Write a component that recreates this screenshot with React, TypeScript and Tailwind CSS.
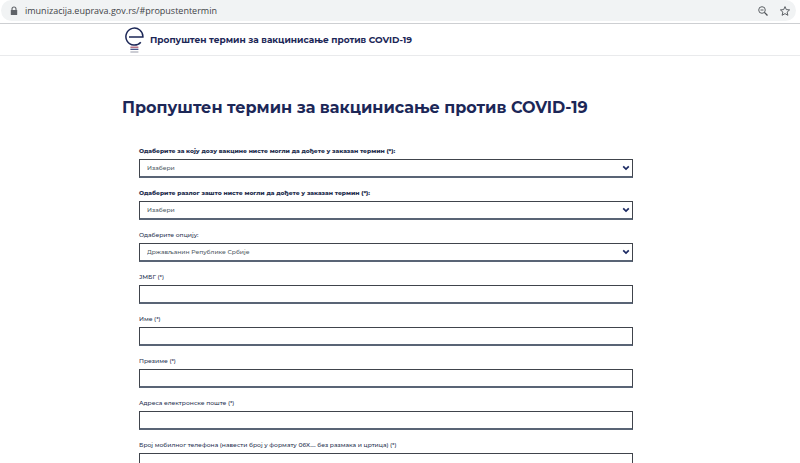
import React, { useState } from 'react';

interface Field {
  id: string;
  label: string;
  bold?: boolean;
  options?: string[];
}

const TITLE = 'Пропуштен термин за вакцинисање против COVID-19';

const fields: Field[] = [
  {
    id: 'doza',
    label: 'Одаберите за коју дозу вакцине нисте могли да дођете у заказан термин (*):',
    bold: true,
    options: ['Изабери'],
  },
  {
    id: 'razlog',
    label: 'Одаберите разлог зашто нисте могли да дођете у заказан термин (*):',
    bold: true,
    options: ['Изабери'],
  },
  { id: 'opcija', label: 'Одаберите опцију:', options: ['Држављанин Републике Србије'] },
  { id: 'jmbg', label: 'ЈМБГ (*)' },
  { id: 'ime', label: 'Име (*)' },
  { id: 'prezime', label: 'Презиме (*)' },
  { id: 'email', label: 'Адреса електронске поште (*)' },
  { id: 'telefon', label: 'Број мобилног телефона (навести број у формату 06X.... без размака и цртица) (*)' },
];

const AddressBar: React.FC = () => {
  const [url, setUrl] = useState('imunizacija.euprava.gov.rs/#propustentermin');

  return (
    <div className="h-6 shrink-0 border-b border-[#cdcfd2] bg-white pl-px pr-1">
      <div className="flex h-[21px] items-center rounded-full bg-[#f1f3f4] pl-2 pr-1">
        <svg viewBox="0 0 10 10" className="h-[10px] w-[10px] text-[#5f6368]" aria-hidden="true">
          <path d="M3 4.5V3a2 2 0 0 1 4 0v1.500" fill="none" stroke="currentColor" strokeWidth="1.1" />
          <rect x="1.800" y="4" width="6.400" height="5" rx="0.600" fill="currentColor" />
        </svg>
        <input
          type="text"
          aria-label="Address"
          value={url}
          onChange={(e) => setUrl(e.target.value)}
          className="ml-1.5 min-w-0 flex-1 bg-transparent font-['Open_Sans',sans-serif] text-[9px] leading-4 text-[#3f4347] focus:outline-none"
        />
        <button type="button" aria-label="Zoom" className="mr-3 text-[#4d5156]">
          <svg viewBox="0 0 10 10" className="h-[10px] w-[10px]" fill="none" stroke="currentColor">
            <circle cx="4" cy="4" r="3.300" strokeWidth="0.900" />
            <path d="M6.400 6.400L9.500 9.500" strokeWidth="1.300" />
            <path d="M2.500 4h3" strokeWidth="0.900" />
          </svg>
        </button>
        <button type="button" aria-label="Bookmark" className="mr-0.5 text-[#4d5156]">
          <svg viewBox="0 0 10 10" className="h-[10px] w-[10px]" fill="none" stroke="currentColor" strokeWidth="0.900">
            <path d="M5 0.600L6.300 3.600L9.600 3.900L7.100 6.100L7.900 9.300L5 7.600L2.100 9.300L2.900 6.100L0.400 3.900L3.700 3.600Z" />
          </svg>
        </button>
      </div>
    </div>
  );
};

const Logo: React.FC = () => (
  <svg viewBox="0 0 20 26" className="h-[26px] w-5" fill="none" aria-hidden="true">
    <path d="M5 10H18.900A8.500 8.500 0 1 0 16.800 15.200" stroke="#1c2757" strokeWidth="1.500" />
    <path d="M6.400 20.200h8" stroke="#a8546b" strokeWidth="1.200" />
    <path d="M6.400 22.300h8" stroke="#35457f" strokeWidth="1.200" />
    <path d="M6.400 25h8" stroke="#a9acb8" strokeWidth="1.200" />
  </svg>
);

const FormField: React.FC<{ field: Field }> = ({ field }) => (
  <div>
    <label
      htmlFor={field.id}
      className={`block whitespace-nowrap text-[6px] leading-3 text-[#26304f] ${field.bold ? 'font-extrabold' : 'font-medium'}`}
    >
      {field.label}
    </label>
    {field.options ? (
      <div className="relative mt-0.5">
        <select
          id={field.id}
          className="block h-[19px] w-full appearance-none border border-b-2 border-[#40444c] border-b-[#596475] bg-white px-[7px] text-[6px] font-medium leading-4 text-[#4d5862]"
        >
          {field.options.map((option) => (
            <option key={option}>{option}</option>
          ))}
        </select>
        <svg viewBox="0 0 8 6" className="pointer-events-none absolute right-[3px] top-1.5 h-1.5 w-2" fill="none" aria-hidden="true">
          <path d="M1.200 1.400L4 4L6.800 1.400" stroke="#1c2a63" strokeWidth="1.700" />
        </svg>
      </div>
    ) : (
      <input
        id={field.id}
        type="text"
        className="mt-0.5 block h-[19px] w-full border border-b-2 border-[#40444c] border-b-[#596475] bg-white px-[7px] text-[6px] font-medium text-[#4d5862]"
      />
    )}
  </div>
);

const App: React.FC = () => {
  return (
    <div className="flex h-screen flex-col overflow-hidden bg-white font-['Montserrat','Inter',sans-serif]">
      <AddressBar />

      {/* Site header */}
      <header className="h-8 shrink-0 border-b border-[#e9eaec]">
        <div className="mx-auto flex h-full w-full max-w-[556px] items-center gap-1.5 pl-0.5">
          <Logo />
          <span className="whitespace-nowrap text-[9px] font-bold leading-4 text-[#1c2757]">{TITLE}</span>
        </div>
      </header>

      <main className="min-h-0 flex-1 overflow-hidden">
        <div className="mx-auto w-full max-w-[556px] pt-10">
          <h1 className="whitespace-nowrap text-[16px] font-bold leading-6 text-[#1c2757]">{TITLE}</h1>

          {/* Missed appointment form */}
          <form className="flex flex-col gap-[9px] pb-8 pl-[17px] pr-[45px] pt-[25px]">
            {fields.map((field) => (
              <FormField key={field.id} field={field} />
            ))}
          </form>
        </div>
      </main>
    </div>
  );
};

export default App;
